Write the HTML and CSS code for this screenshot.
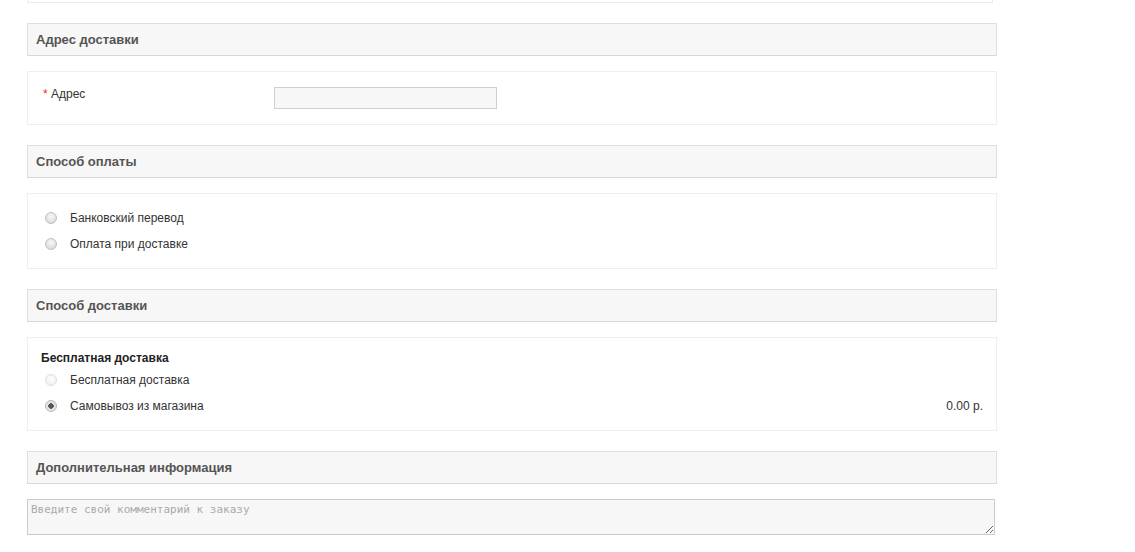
FILE: index.html
```html
<!DOCTYPE html>
<html lang="ru">
<head>
<meta charset="utf-8">
<title>Оформление заказа</title>
<link rel="stylesheet" href="styles.css">
</head>
<body>
<div class="checkout">
  <div class="top-box"></div>

  <div class="section-head">Адрес доставки</div>
  <div class="section-body address-body">
    <div class="field-row">
      <label class="field-label"><span class="req">*</span> Адрес</label>
      <input class="text-input" type="text">
    </div>
  </div>

  <div class="section-head">Способ оплаты</div>
  <div class="section-body pay-body">
    <div class="radio-row"><span class="radio"></span><span class="radio-text">Банковский перевод</span></div>
    <div class="radio-row"><span class="radio"></span><span class="radio-text">Оплата при доставке</span></div>
  </div>

  <div class="section-head">Способ доставки</div>
  <div class="section-body ship-body">
    <div class="ship-title">Бесплатная доставка</div>
    <div class="radio-row"><span class="radio disabled"></span><span class="radio-text">Бесплатная доставка</span></div>
    <div class="radio-row"><span class="radio checked"></span><span class="radio-text">Самовывоз из магазина</span><span class="price">0.00 р.</span></div>
  </div>

  <div class="section-head">Дополнительная информация</div>
  <textarea class="comment" placeholder="Введите свой комментарий к заказу"></textarea>
</div>
</body>
</html>
```

FILE: styles.css
```css
html, body {
  margin: 0;
  padding: 0;
  background: #fff;
}
body {
  font-family: "Liberation Sans", Arial, sans-serif;
  font-size: 12px;
  color: #333;
}
.checkout {
  width: 970px;
  margin-left: 27px;
  display: flex;
  flex-direction: column;
}
.top-box {
  height: 2px;
  width: 964px;
  border: 1px solid #ececec;
  border-top: none;
  margin-bottom: 20px;
}
.section-head {
  box-sizing: border-box;
  height: 33px;
  line-height: 31px;
  padding-left: 8px;
  background: #f7f7f7;
  border: 1px solid #dedede;
  border-bottom-color: #d8d8d8;
  font-size: 13px;
  font-weight: bold;
  color: #555;
  margin-bottom: 15px;
}
.section-body {
  box-sizing: border-box;
  width: 970px;
  border: 1px solid #efefef;
  margin-bottom: 20px;
}
.address-body {
  height: 54px;
  padding: 15px 0 0 15px;
}
.field-row {
  display: flex;
  align-items: flex-start;
}
.field-label {
  width: 231px;
  line-height: 14px;
  color: #333;
}
.req {
  color: #e03030;
}
.text-input {
  box-sizing: border-box;
  width: 223px;
  height: 22px;
  margin: 0;
  padding: 0;
  border: 1px solid #cfcfcf;
  background: #f7f7f7;
}
.pay-body {
  height: 76px;
  padding: 11px 0 0 17px;
}
.radio-row {
  display: flex;
  align-items: center;
  height: 26px;
}
.radio {
  box-sizing: border-box;
  width: 12px;
  height: 12px;
  border-radius: 50%;
  border: 1px solid #c0c0c0;
  background: radial-gradient(circle at 50% 35%, #f8f8f8 0%, #e0e0e0 65%, #d0d0d0 100%);
  margin-right: 13px;
  flex: none;
}
.radio.disabled {
  border-color: #dedede;
  background: radial-gradient(circle at 50% 35%, #fdfdfd 0%, #f0f0f0 80%);
}
.radio.checked {
  background: radial-gradient(circle, #555 0, #555 2.5px, #e8e8e8 3px, #dadada 100%);
  border-color: #b8b8b8;
}
.radio-text {
  color: #333;
}
.ship-body {
  height: 94px;
  padding: 12px 13px 0 17px;
}
.ship-title {
  font-weight: bold;
  color: #222;
  margin-left: -4px;
  line-height: 16px;
  margin-bottom: 1px;
}
.price {
  margin-left: auto;
  color: #333;
}
.comment {
  box-sizing: border-box;
  width: 968px;
  height: 36px;
  margin: 0;
  padding: 3px 3px;
  border: 1px solid #cccccc;
  background: #f7f7f7;
  font-family: "DejaVu Sans Mono", monospace;
  font-size: 11px;
  color: #333;
  resize: vertical;
}
.comment::placeholder {
  color: #aaaaaa;
}
```
